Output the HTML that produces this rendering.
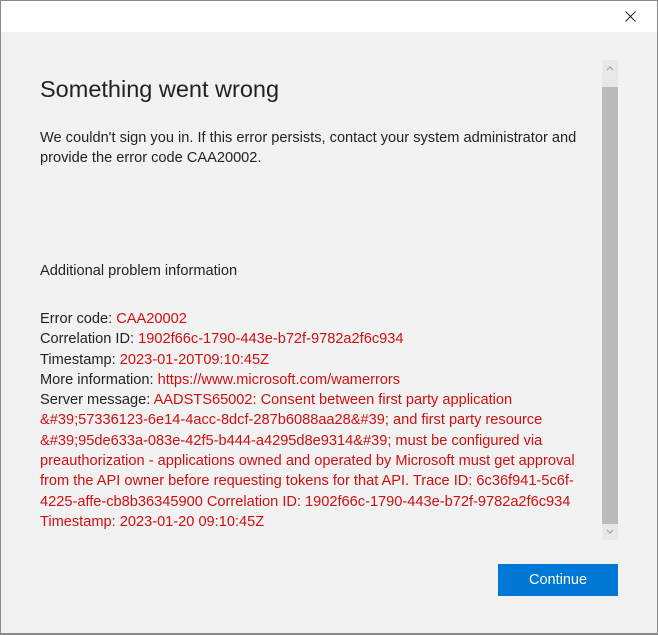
<!DOCTYPE html>
<html><head><style>
html,body{margin:0;padding:0;}
body{width:658px;height:635px;background:#f2f2f2;position:relative;overflow:hidden;font-family:"Liberation Sans",sans-serif;}
.frame{position:absolute;left:0;top:0;border:1px solid #8a8a8a;border-bottom:2px solid #8a8a8a;box-sizing:border-box;width:658px;height:635px;}
.tb{position:absolute;left:1px;top:1px;width:656px;height:31px;background:#fff;}
.t{position:absolute;left:40px;top:76px;font-size:23.5px;color:#222;}
.p{position:absolute;left:40px;font-size:14.6px;color:#222;white-space:nowrap;line-height:20.3px;}
.r{color:#cf1010;}
.sb{position:absolute;left:602px;top:60px;width:16px;height:480px;background:#e8e8e8;}
.th{position:absolute;left:602px;top:87px;width:16px;height:437px;background:#bbb;}
.btn{position:absolute;left:498px;top:564px;width:120px;height:32px;background:#0078d7;color:#fff;font-size:14.5px;text-align:center;line-height:32px;}
</style></head><body>
<div class="frame"></div>
<div class="tb"></div>
<svg style="position:absolute;left:625px;top:11px" width="11" height="11"><path d="M0.5 0.5 L10.5 10.5 M10.5 0.5 L0.5 10.5" stroke="#222" stroke-width="1"/></svg>
<div class="t">Something went wrong</div>
<div class="p" style="top:128px">We couldn't sign you in. If this error persists, contact your system administrator and<br>provide the error code CAA20002.</div>
<div class="p" style="top:261px">Additional problem information</div>
<div class="p" style="top:309px">Error code: <span class="r">CAA20002</span><br>Correlation ID: <span class="r">1902f66c-1790-443e-b72f-9782a2f6c934</span><br>Timestamp: <span class="r">2023-01-20T09:10:45Z</span><br>More information: <span class="r">https://www.microsoft.com/wamerrors</span><br>Server message: <span class="r">AADSTS65002: Consent between first party application<br>&amp;#39;57336123-6e14-4acc-8dcf-287b6088aa28&amp;#39; and first party resource<br>&amp;#39;95de633a-083e-42f5-b444-a4295d8e9314&amp;#39; must be configured via<br>preauthorization - applications owned and operated by Microsoft must get approval<br>from the API owner before requesting tokens for that API. Trace ID: 6c36f941-5c6f-<br>4225-affe-cb8b36345900 Correlation ID: 1902f66c-1790-443e-b72f-9782a2f6c934<br>Timestamp: 2023-01-20 09:10:45Z</span></div>
<div class="sb"></div>
<div class="th"></div>
<svg style="position:absolute;left:602px;top:60px" width="16" height="480"><path d="M5 10 L8 7 L11 10" fill="none" stroke="#999" stroke-width="1"/><path d="M5 470 L8 473 L11 470" fill="none" stroke="#999" stroke-width="1"/></svg>
<div class="btn">Continue</div>
</body></html>
